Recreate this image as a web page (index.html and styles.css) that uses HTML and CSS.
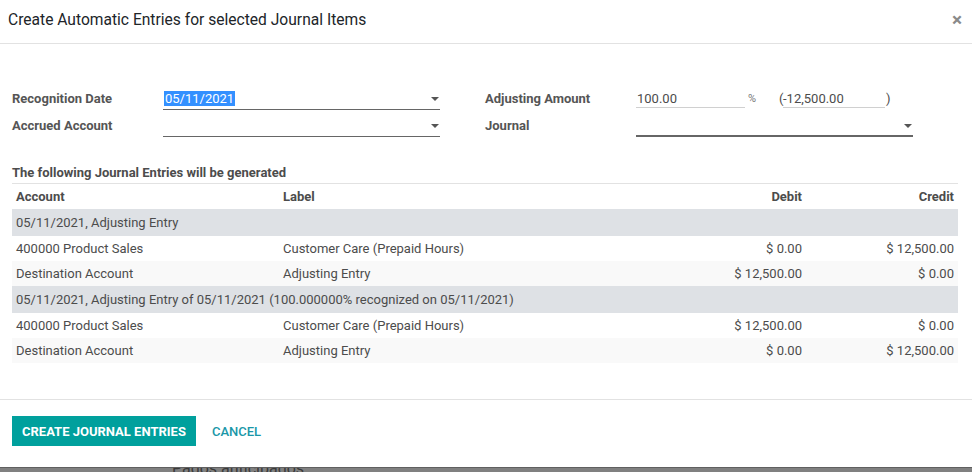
FILE: index.html
```html
<!DOCTYPE html>
<html>
<head>
<meta charset="utf-8">
<link rel="stylesheet" href="styles.css">
</head>
<body>
<div class="modal">
  <header class="modal-header">
    <h4 class="modal-title">Create Automatic Entries for selected Journal Items</h4>
    <span class="close">×</span>
  </header>
  <main class="modal-body">
    <div class="form-groups">
      <div class="group">
        <label class="lbl">Recognition Date</label>
        <div class="field select"><span class="sel">05/11/2021</span><i class="caret"></i></div>
        <label class="lbl">Accrued Account</label>
        <div class="field select"><span></span><i class="caret"></i></div>
      </div>
      <div class="group">
        <label class="lbl">Adjusting Amount</label>
        <div class="amount">
          <span class="inp pct">100.00</span>
          <span class="sym">%</span>
          <span class="paren">(</span>
          <span class="inp val">-12,500.00</span>
          <span class="paren">)</span>
        </div>
        <label class="lbl">Journal</label>
        <div class="field select thick"><span></span><i class="caret"></i></div>
      </div>
    </div>
    <div class="section-title">The following Journal Entries will be generated</div>
    <table class="entries">
      <colgroup><col class="c1"><col class="c2"><col class="c3"><col class="c4"></colgroup>
      <thead>
        <tr><th>Account</th><th>Label</th><th class="num">Debit</th><th class="num">Credit</th></tr>
      </thead>
      <tbody>
        <tr class="grp"><td colspan="4">05/11/2021, Adjusting Entry</td></tr>
        <tr><td>400000 Product Sales</td><td>Customer Care (Prepaid Hours)</td><td class="num">$ 0.00</td><td class="num">$ 12,500.00</td></tr>
        <tr class="alt"><td>Destination Account</td><td>Adjusting Entry</td><td class="num">$ 12,500.00</td><td class="num">$ 0.00</td></tr>
        <tr class="grp"><td colspan="4">05/11/2021, Adjusting Entry of 05/11/2021 (100.000000% recognized on 05/11/2021)</td></tr>
        <tr><td>400000 Product Sales</td><td>Customer Care (Prepaid Hours)</td><td class="num">$ 12,500.00</td><td class="num">$ 0.00</td></tr>
        <tr class="alt"><td>Destination Account</td><td>Adjusting Entry</td><td class="num">$ 0.00</td><td class="num">$ 12,500.00</td></tr>
      </tbody>
    </table>
  </main>
  <footer class="modal-footer">
    <button class="btn-primary">CREATE JOURNAL ENTRIES</button>
    <button class="btn-link">CANCEL</button>
  </footer>
</div>
<div class="backdrop"><span>Pagos anticipados</span></div>
</body>
</html>
```

FILE: styles.css
```css
html, body {
  margin: 0;
  padding: 0;
  background: #fff;
  font-family: Roboto, "Noto Sans", sans-serif;
  font-size: 13px;
  color: #4c4c4c;
  overflow: hidden;
}
.modal {
  width: 972px;
  height: 467px;
  background: #fff;
  display: flex;
  flex-direction: column;
}
.modal-header {
  border-bottom: 1px solid #e2e2e2;
  display: flex;
  align-items: center;
  justify-content: space-between;
  padding: 0 10px 4px 8px;
  box-sizing: border-box;
  height: 44px;
}
.modal-title {
  margin: 0;
  font-size: 15.6px;
  font-weight: 400;
  color: #212529;
  line-height: 20px;
}
.close {
  font-size: 19px;
  font-weight: 700;
  color: #8a8a8a;
  line-height: 20px;
}
.modal-body {
  flex: 1;
  padding: 43px 14px 0 12px;
}
.form-groups {
  display: flex;
  gap: 45px;
}
.group {
  width: 428px;
  display: grid;
  grid-template-columns: 151px 277px;
  grid-auto-rows: 23px;
  row-gap: 4px;
}
.lbl {
  font-weight: 700;
  color: #555;
  line-height: 17px;
  padding-top: 3px;
}
.field {
  position: relative;
  border-bottom: 1px solid #666;
  height: 22px;
  box-sizing: content-box;
  display: flex;
  align-items: center;
  color: #4c4c4c;
}
.field.thick {
  border-bottom-width: 2px;
  height: 21px;
}
.sel {
  background: #3390ff;
  color: #fff;
  padding: 0 1px;
  margin-left: 1px;
  line-height: 15px;
}
.caret {
  position: absolute;
  right: 1px;
  top: 10px;
  width: 0;
  height: 0;
  border-left: 4px solid transparent;
  border-right: 4px solid transparent;
  border-top: 4px solid #555;
}
.amount {
  display: flex;
  align-items: flex-start;
  color: #4c4c4c;
}
.inp {
  border-bottom: 1px solid #d0d0d0;
  line-height: 17px;
  padding-top: 3px;
  height: 21px;
  box-sizing: border-box;
  padding-left: 1px;
}
.inp.pct { width: 109px; }
.inp.val { width: 102px; padding-left: 0; }
.sym {
  font-size: 11px;
  color: #777;
  line-height: 17px;
  padding-top: 3px;
  margin-left: 3px;
  width: 31px;
}
.paren {
  line-height: 17px;
  padding-top: 3px;
  width: 4px;
}
.paren:last-child { margin-left: 1px; }
.section-title {
  margin-top: 27px;
  font-weight: 700;
  color: #4c4c4c;
  line-height: 18px;
  padding-bottom: 1px;
  border-bottom: 1px solid #e2e2e2;
}
.entries {
  width: 946px;
  border-collapse: collapse;
  table-layout: fixed;
}
.c1 { width: 267px; }
.c2 { width: 375px; }
.c3 { width: 152px; }
.c4 { width: 152px; }
.entries th, .entries td {
  padding: 4px 4px;
  line-height: 17px;
  text-align: left;
  white-space: nowrap;
}
.entries th {
  font-weight: 700;
  color: #4c4c4c;
}
.entries .num { text-align: right; }
.entries tr.grp td {
  background: #dee1e5;
  padding: 5px 4px 5px;
}
.entries tr.alt td { background: #f9f9f9; }
.modal-footer {
  height: 68px;
  box-sizing: border-box;
  border-top: 1px solid #e2e2e2;
  padding: 16px 12px 0;
  display: flex;
  align-items: flex-start;
  gap: 6px;
}
button {
  font-family: Roboto, "Noto Sans", sans-serif;
  font-size: 13px;
  font-weight: 500;
  border: 0;
  height: 30px;
  padding: 0 10px;
  white-space: nowrap;
  cursor: pointer;
}
.btn-primary {
  background: #00a09d;
  color: #fff;
  font-weight: 700;
  min-width: 183px;
}
.btn-link {
  background: transparent;
  color: #1a97a8;
}
.backdrop {
  height: 5px;
  background: #808080;
  border-top: 1px solid #606060;
  overflow: hidden;
  position: relative;
}
.backdrop span {
  position: absolute;
  left: 172px;
  top: -9px;
  font-size: 16px;
  color: #3a3a3a;
}
```
